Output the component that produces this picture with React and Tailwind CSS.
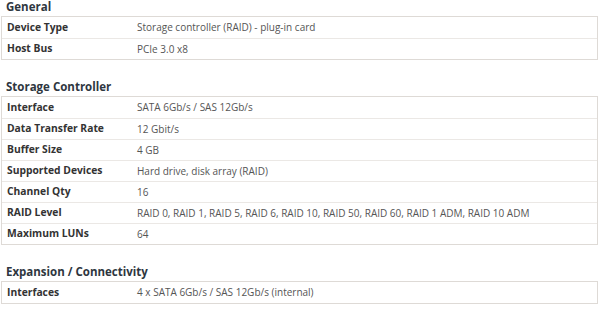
const sections = [
    {
        title: 'General',
        rows: [
            ['Device Type', 'Storage controller (RAID) - plug-in card'],
            ['Host Bus', 'PCIe 3.0 x8'],
        ],
    },
    {
        title: 'Storage Controller',
        rows: [
            ['Interface', 'SATA 6Gb/s / SAS 12Gb/s'],
            ['Data Transfer Rate', '12 Gbit/s'],
            ['Buffer Size', '4 GB'],
            ['Supported Devices', 'Hard drive, disk array (RAID)'],
            ['Channel Qty', '16'],
            ['RAID Level', 'RAID 0, RAID 1, RAID 5, RAID 6, RAID 10, RAID 50, RAID 60, RAID 1 ADM, RAID 10 ADM'],
            ['Maximum LUNs', '64'],
        ],
    },
    {
        title: 'Expansion / Connectivity',
        rows: [['Interfaces', '4 x SATA 6Gb/s / SAS 12Gb/s (internal)']],
    },
];

const App = () => {
    return (
        <div className="w-[600px] h-[321px] bg-white overflow-hidden font-['Open_Sans',sans-serif]">
            {sections.map((section, i) => (
                <div key={section.title} className={i > 0 ? 'mt-[20px]' : ''}>
                    <h3 className="h-[16px] leading-[13px] pl-[6px] text-[11.5px] font-bold text-[#2e3640]">
                        {section.title}
                    </h3>
                    <div className="ml-[1px] w-[597px] border border-[#dedad6]">
                        {section.rows.map(([label, value], j) => (
                            <div
                                key={label}
                                className={`flex h-[21px] items-center ${j > 0 ? 'border-t border-[#ebe8e5]' : ''}`}
                            >
                                <div className="w-[135px] pl-[5px] text-[10.3px] font-bold text-[#333]">{label}</div>
                                <div className="flex-1 text-[10px] text-[#555]">{value}</div>
                            </div>
                        ))}
                    </div>
                </div>
            ))}
        </div>
    );
};

export default App;
